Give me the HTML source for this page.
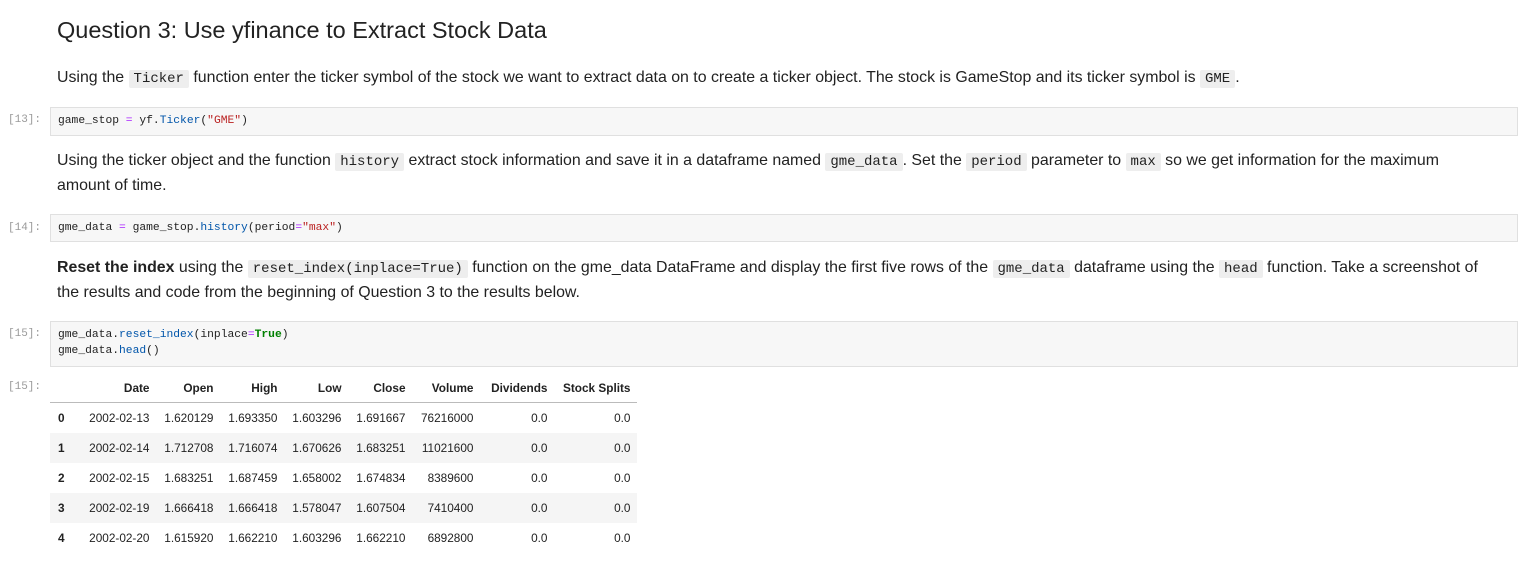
<!DOCTYPE html>
<html><head><meta charset="utf-8"><style>
body{margin:0;width:1532px;height:569px;background:#fff;font-family:"Liberation Sans",sans-serif;color:#222;position:relative;overflow:hidden}
h1{position:absolute;left:57px;top:17px;margin:0;font-weight:normal;font-size:23.5px;color:#222}
.p{position:absolute;left:57px;font-size:15.9px;line-height:24px;color:#222;white-space:nowrap}
code{font-family:"Liberation Mono",monospace;font-size:14px;background:#eee;padding:1px 5px;border-radius:2px}
.cell{position:absolute;left:50px;width:1468px;background:#f7f7f7;border:1px solid #e0e0e0;font-family:"Liberation Mono",monospace;font-size:11.3px;line-height:16px;padding:5px 7px;box-sizing:border-box;color:#222}
.pr{position:absolute;left:8px;font-family:"Liberation Mono",monospace;font-size:11px;color:#9a9a9a}
.b{color:#0055aa}.s{color:#ba2121}.g{color:#008000;font-weight:bold}.o{color:#aa22ff}
table{position:absolute;left:50px;top:374px;border-collapse:collapse;font-size:11.8px;color:#222}
td,th{text-align:right;padding:0 6.5px;height:30px}
th{font-weight:bold}
thead th{border-bottom:1px solid #bbb;height:28px}
tbody tr:nth-child(2),tbody tr:nth-child(4){background:#f5f5f5}
</style></head><body>
<h1>Question 3: Use yfinance to Extract Stock Data</h1>
<div class="p" style="top:66px">Using the <code>Ticker</code> function enter the ticker symbol of the stock we want to extract data on to create a ticker object. The stock is GameStop and its ticker symbol is <code>GME</code>.</div>
<div class="pr" style="top:114px">[13]:</div>
<div class="cell" style="top:107px;height:29px">game_stop <span class="o">=</span> yf<span>.</span><span class="b">Ticker</span>(<span class="s">"GME"</span>)</div>
<div class="p" style="top:149px">Using the ticker object and the function <code>history</code> extract stock information and save it in a dataframe named <code>gme_data</code>. Set the <code>period</code> parameter to <code>max</code> so we get information for the maximum<br>amount of time.</div>
<div class="pr" style="top:222px">[14]:</div>
<div class="cell" style="top:214px;height:28px">gme_data <span class="o">=</span> game_stop<span>.</span><span class="b">history</span>(period<span class="o">=</span><span class="s">"max"</span>)</div>
<div class="p" style="top:256px"><b>Reset the index</b> using the <code>reset_index(inplace=True)</code> function on the gme_data DataFrame and display the first five rows of the <code>gme_data</code> dataframe using the <code>head</code> function. Take a screenshot of<br>the results and code from the beginning of Question 3 to the results below.</div>
<div class="pr" style="top:328px">[15]:</div>
<div class="cell" style="top:321px;height:46px">gme_data<span>.</span><span class="b">reset_index</span>(inplace<span class="o">=</span><span class="g">True</span>)<br>gme_data<span>.</span><span class="b">head</span>()</div>
<div class="pr" style="top:381px">[15]:</div>
<table>
<thead><tr><th style="width:8px"></th><th style="width:72px">Date</th><th style="width:51px">Open</th><th style="width:51px">High</th><th style="width:51px">Low</th><th style="width:51px">Close</th><th style="width:55px">Volume</th><th style="width:61px">Dividends</th><th style="width:70px">Stock Splits</th></tr></thead>
<tbody>
<tr><th>0</th><td>2002-02-13</td><td>1.620129</td><td>1.693350</td><td>1.603296</td><td>1.691667</td><td>76216000</td><td>0.0</td><td>0.0</td></tr>
<tr><th>1</th><td>2002-02-14</td><td>1.712708</td><td>1.716074</td><td>1.670626</td><td>1.683251</td><td>11021600</td><td>0.0</td><td>0.0</td></tr>
<tr><th>2</th><td>2002-02-15</td><td>1.683251</td><td>1.687459</td><td>1.658002</td><td>1.674834</td><td>8389600</td><td>0.0</td><td>0.0</td></tr>
<tr><th>3</th><td>2002-02-19</td><td>1.666418</td><td>1.666418</td><td>1.578047</td><td>1.607504</td><td>7410400</td><td>0.0</td><td>0.0</td></tr>
<tr><th>4</th><td>2002-02-20</td><td>1.615920</td><td>1.662210</td><td>1.603296</td><td>1.662210</td><td>6892800</td><td>0.0</td><td>0.0</td></tr>
</tbody></table>
</body></html>
